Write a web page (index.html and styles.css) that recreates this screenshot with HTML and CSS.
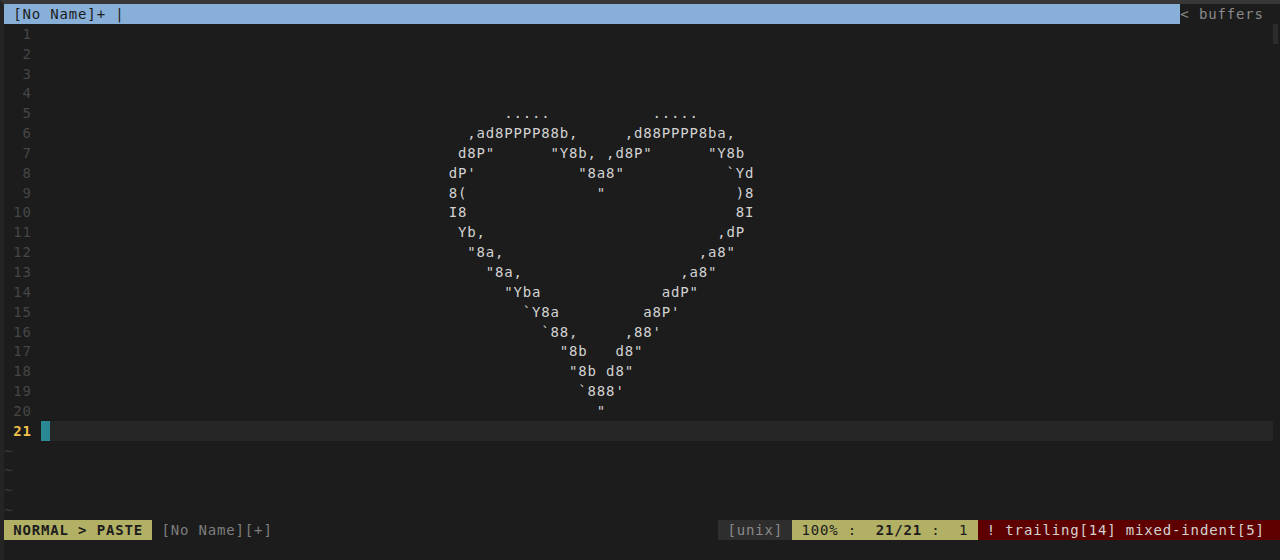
FILE: index.html
```html
<!DOCTYPE html>
<html>
<head>
<meta charset="utf-8">
<title>vim</title>
<link rel="stylesheet" href="styles.css">
</head>
<body>
<div class="screen">
  <div class="tabline">
    <span class="tab-active"> [No Name]+ |</span>
    <span class="tab-right">&lt; buffers </span>
  </div>
  <div class="tab-gap"></div>

  <div class="buffer">
    <div class="line"><span class="nr">  1 </span><span class="txt"></span></div>
    <div class="line"><span class="nr">  2 </span><span class="txt"></span></div>
    <div class="line"><span class="nr">  3 </span><span class="txt"></span></div>
    <div class="line"><span class="nr">  4 </span><span class="txt"></span></div>
    <div class="line"><span class="nr">  5 </span><span class="txt">                                                  .....           .....</span></div>
    <div class="line"><span class="nr">  6 </span><span class="txt">                                              ,ad8PPPP88b,     ,d88PPPP8ba,</span></div>
    <div class="line"><span class="nr">  7 </span><span class="txt">                                             d8P"      "Y8b, ,d8P"      "Y8b</span></div>
    <div class="line"><span class="nr">  8 </span><span class="txt">                                            dP'           "8a8"           `Yd</span></div>
    <div class="line"><span class="nr">  9 </span><span class="txt">                                            8(              "              )8</span></div>
    <div class="line"><span class="nr"> 10 </span><span class="txt">                                            I8                             8I</span></div>
    <div class="line"><span class="nr"> 11 </span><span class="txt">                                             Yb,                         ,dP</span></div>
    <div class="line"><span class="nr"> 12 </span><span class="txt">                                              "8a,                     ,a8"</span></div>
    <div class="line"><span class="nr"> 13 </span><span class="txt">                                                "8a,                 ,a8"</span></div>
    <div class="line"><span class="nr"> 14 </span><span class="txt">                                                  "Yba             adP"</span></div>
    <div class="line"><span class="nr"> 15 </span><span class="txt">                                                    `Y8a         a8P'</span></div>
    <div class="line"><span class="nr"> 16 </span><span class="txt">                                                      `88,     ,88'</span></div>
    <div class="line"><span class="nr"> 17 </span><span class="txt">                                                        "8b   d8"</span></div>
    <div class="line"><span class="nr"> 18 </span><span class="txt">                                                         "8b d8"</span></div>
    <div class="line"><span class="nr"> 19 </span><span class="txt">                                                          `888'</span></div>
    <div class="line"><span class="nr"> 20 </span><span class="txt">                                                            "</span></div>
    <div class="line cur"><span class="nr nr-cur"> 21 </span><span class="txt"><span class="cursor"> </span></span></div>
    <div class="line tilde">~</div>
    <div class="line tilde">~</div>
    <div class="line tilde">~</div>
    <div class="line tilde">~</div>
  </div>
  <div class="scrollbar"><div class="thumb"></div></div>

  <div class="statusline">
    <span class="seg mode"> NORMAL &gt; PASTE </span>
    <span class="seg file"> [No Name][+]</span>
    <span class="spacer"></span>
    <span class="seg ff"> [unix] </span>
    <span class="seg pos"> 100% :  <b>21/21</b> :  1 </span>
    <span class="seg warn"> ! trailing[14] mixed-indent[5] </span>
  </div>
  <div class="cmdline"></div>
</div>
</body>
</html>
```

FILE: styles.css
```css
html, body {
  margin: 0;
  padding: 0;
  background: #1c1c1c;
}

body {
  width: 1280px;
  height: 560px;
  overflow: hidden;
}

.screen {
  display: grid;
  grid-template-columns: 1269px 7px;
  grid-template-rows: 19.857px 496.4px 19.857px 19.857px;
  border-top: 4px solid #373737;
  border-left: 4px solid #242424;
  font-family: "DejaVu Sans Mono", monospace;
  font-size: 14px;
  letter-spacing: 0.8345px;
  line-height: 21.857px;
  white-space: pre;
  color: #d2d2d2;
}

/* tabline */
.tabline {
  display: flex;
  height: 19.857px;
  overflow: hidden;
}
.tab-active {
  flex: 1;
  background: #87afd7;
  color: #1c1c1c;
}
.tab-right {
  color: #8a8a8a;
  background: #1c1c1c;
}
.tab-gap {
  background: #1c1c1c;
}

/* buffer */
.buffer {
  display: flex;
  flex-direction: column;
}
.line {
  display: flex;
  height: 19.857px;
  flex: none;
}
.nr {
  color: #464646;
}
.nr-cur {
  color: #f2c24e;
  font-weight: bold;
}
.txt {
  flex: 1;
}
.cur .txt {
  background: #262626;
}
.cursor {
  display: inline-block;
  height: 19.857px;
  vertical-align: top;
  background: #2a8995;
}
.tilde {
  color: #3a3a3a;
}

.scrollbar {
  display: flex;
  flex-direction: column;
}
.thumb {
  height: 19.857px;
  width: 5px;
  background: #2c2c2c;
}

/* statusline */
.statusline {
  grid-column: 1 / 3;
  display: flex;
  height: 19.857px;
  overflow: hidden;
}
.spacer {
  flex: 1;
}
.mode {
  background: #b1b065;
  color: #1c1c1c;
  font-weight: bold;
}
.file {
  color: #7e7e7e;
}
.ff {
  background: #2e2e2e;
  color: #8a8a8a;
}
.pos {
  background: #b1b065;
  color: #1c1c1c;
}
.pos b {
  font-weight: bold;
}
.warn {
  background: #5f0000;
  color: #d2d2d2;
  padding-right: 6px;
}
.cmdline {
  grid-column: 1 / 3;
}
```
